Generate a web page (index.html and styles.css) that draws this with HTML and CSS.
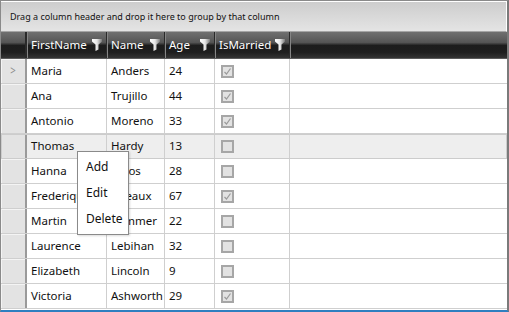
FILE: index.html
```html
<!DOCTYPE html>
<html lang="en">
<head>
  <meta charset="UTF-8" />
  <title>Grid</title>
  <link rel="stylesheet" href="styles.css">
</head>
<body>
  <div class="grid">
    <div class="group-panel">Drag a column header and drop it here to group by that column</div>

    <div class="row head">
      <div class="ind"></div>
      <div class="cell c1">FirstName <span class="filter"></span></div>
      <div class="cell c2">Name <span class="filter"></span></div>
      <div class="cell c3">Age <span class="filter"></span></div>
      <div class="cell c4">IsMarried <span class="filter"></span></div>
      <div class="cell fill"></div>
    </div>

    <div id="rows"></div>

    <div class="menu">
      <div class="item">Add</div>
      <div class="item">Edit</div>
      <div class="item">Delete</div>
    </div>
  </div>

  <script>
    const data = [
      ['Maria', 'Anders', 24, true],
      ['Ana', 'Trujillo', 44, true],
      ['Antonio', 'Moreno', 33, true],
      ['Thomas', 'Hardy', 13, false],
      ['Hanna', 'Moos', 28, false],
      ['Frederique', 'Citeaux', 67, true],
      ['Martin', 'Sommer', 22, false],
      ['Laurence', 'Lebihan', 32, false],
      ['Elizabeth', 'Lincoln', 9, false],
      ['Victoria', 'Ashworth', 29, true]
    ];

    const funnel = '<svg width="10" height="12" viewBox="0 0 10 12">' +
      '<defs><linearGradient id="fg" x1="0" x2="1"><stop offset="0" stop-color="#fff"/><stop offset="0.5" stop-color="#e6e6e6"/><stop offset="1" stop-color="#7a7a7a"/></linearGradient></defs>' +
      '<path d="M0 0 H10 V2.5 L6.5 5.5 V10.5 L3.5 12 V5.5 L0 2.5 Z" fill="url(#fg)"/></svg>';
    document.querySelectorAll('.filter').forEach(f => f.innerHTML = funnel);

    const check = '<svg width="9" height="9" viewBox="0 0 9 9"><path d="M1.5 5 L3.5 7 L7.5 1.5" fill="none" stroke="#9a9a9a" stroke-width="1.2"/></svg>';

    const rows = document.getElementById('rows');
    data.forEach((d, i) => {
      const row = document.createElement('div');
      row.className = 'row' + (i === 3 ? ' hover' : '');
      row.innerHTML =
        `<div class="ind">${i === 0 ? '<span class="arrow">&gt;</span>' : ''}</div>` +
        `<div class="cell c1">${d[0]}</div>` +
        `<div class="cell c2">${d[1]}</div>` +
        `<div class="cell c3">${d[2]}</div>` +
        `<div class="cell c4"><span class="box">${d[3] ? check : ''}</span></div>` +
        `<div class="cell fill"></div>`;
      rows.appendChild(row);
    });
  </script>
</body>
</html>
```

FILE: styles.css
```css
body {
  margin: 0;
  font-family: "Noto Sans", "Open Sans", sans-serif;
}
.grid {
  position: relative;
  width: 506px;
  height: 309px;
  border: 1px solid #8a8a8a;
  border-right: 2px solid #7a7a7a;
  border-bottom: 2px solid #2f7fc0;
  background: #fff;
  overflow: hidden;
}
.group-panel {
  height: 29px;
  border-top: 1px solid #fff;
  border-right: 1px solid #fff;
  border-bottom: 1px solid #a5a5a5;
  background: linear-gradient(#cdcdcd, #e4e4e4);
  font-size: 9px;
  line-height: 29px;
  padding-left: 9px;
  color: #111;
}
.row {
  display: grid;
  grid-template-columns: 26px 80px 58px 50px 75px 1fr;
  height: 25px;
  border-bottom: 1px solid #cfcfcf;
  box-sizing: border-box;
}
.cell {
  border-right: 1px solid #cfcfcf;
  padding-left: 4px;
  font-size: 11.5px;
  line-height: 24px;
  color: #111;
  white-space: nowrap;
  overflow: hidden;
}
.row.head {
  height: 27px;
  border-bottom: 1px solid #5a5a5a;
  background: linear-gradient(#707070 0%, #555 40%, #1c1c1c 52%, #1e1e1e 78%, #333 100%);
}
.row.head .cell {
  color: #fff;
  border-right: 1px solid #2a2a2a;
  box-shadow: inset 1px 0 #858585;
  display: flex;
  align-items: center;
  justify-content: space-between;
  padding: 0 4px 0 4px;
}
.row.head .ind {
  background: none;
  border-right: 2px solid #2a2a2a;
  box-shadow: none;
}
.row.head .fill {
  border-right: none;
}
.filter {
  display: flex;
}
.ind {
  background: #e3e3e3;
  border-right: 2px solid #9a9a9a;
  box-shadow: inset 1px 1px #f4f4f4;
}
.arrow {
  display: block;
  text-align: center;
  color: #8a8a8a;
  font-size: 12px;
  line-height: 24px;
  transform: scaleX(0.8);
}
.row.hover {
  background: #eeeeee;
  outline: 1px solid #cccccc;
  outline-offset: -1px;
}
.row.hover .ind {
  background: #e3e3e3;
}
.box {
  display: inline-flex;
  align-items: center;
  justify-content: center;
  width: 9px;
  height: 9px;
  margin-top: 6px;
  margin-left: 2px;
  border: 2px solid #a6a6a6;
  background: #e2e2e2;
  vertical-align: top;
}
.fill {
  border-right: none;
}
.menu {
  position: absolute;
  left: 76px;
  top: 150px;
  width: 50px;
  padding: 2px 0;
  background: #fff;
  border: 1px solid #8a8a8a;
  box-shadow: 1px 1px 2px rgba(0, 0, 0, 0.15);
}
.menu .item {
  font-size: 12px;
  line-height: 26px;
  padding-left: 8px;
  color: #111;
}
```
